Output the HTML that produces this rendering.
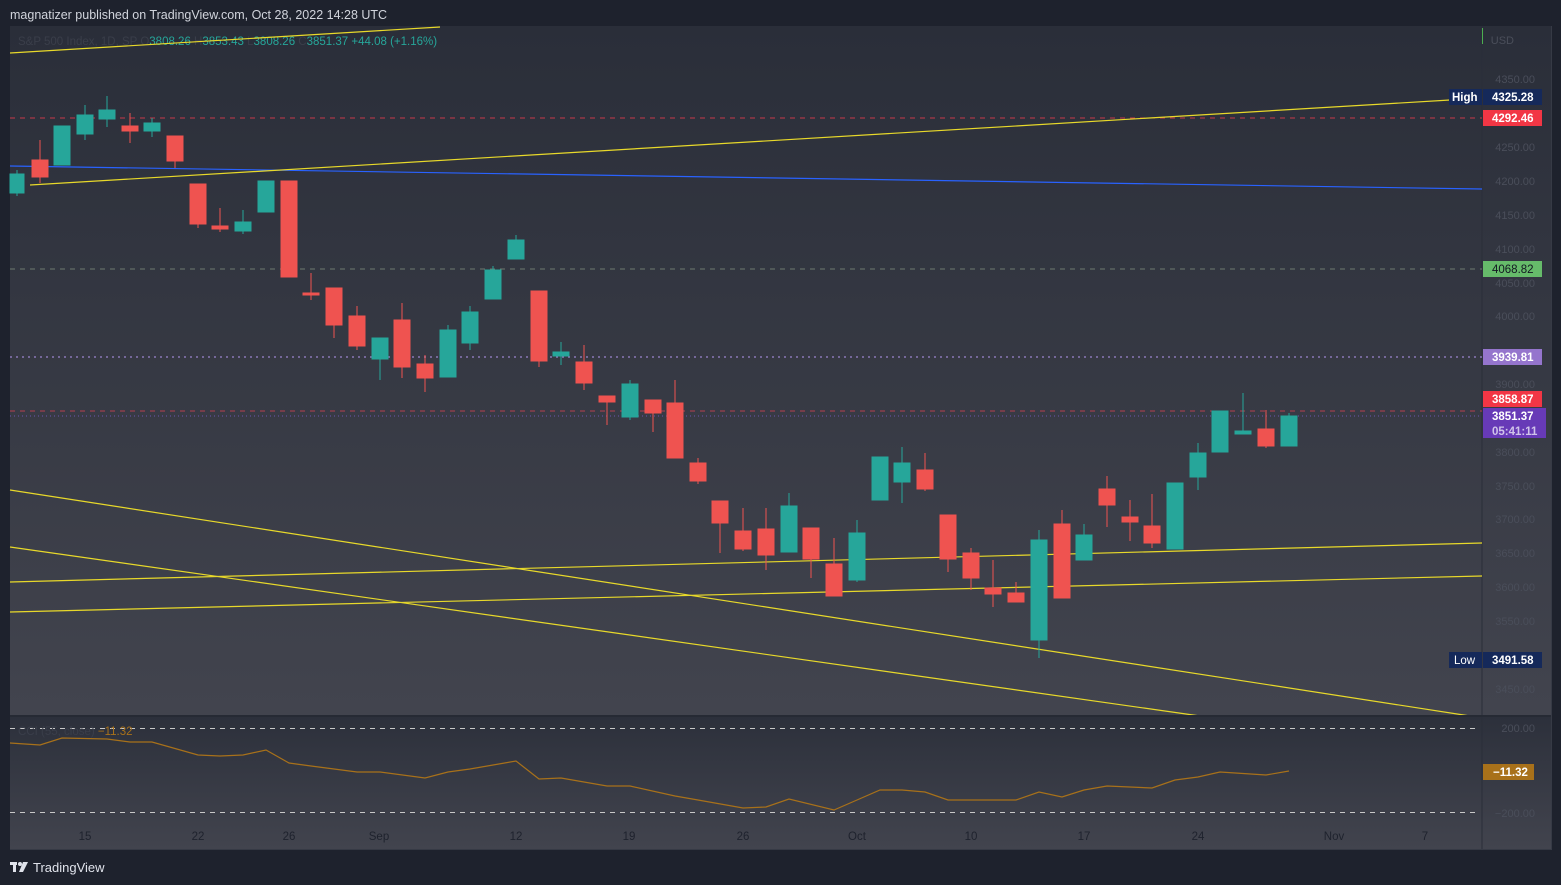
<!DOCTYPE html>
<html><head><meta charset="utf-8"><style>
html,body{margin:0;padding:0;background:#1e222d;width:1561px;height:885px;overflow:hidden;font-family:"Liberation Sans",sans-serif}
</style></head><body>
<svg width="1561" height="885" xmlns="http://www.w3.org/2000/svg" font-family="Liberation Sans, sans-serif">
<defs>
<linearGradient id="bg" x1="0" y1="0" x2="0" y2="1"><stop offset="0" stop-color="#2a2e39"/><stop offset="1" stop-color="#42444e"/></linearGradient>
<linearGradient id="bg2" x1="0" y1="0" x2="0" y2="1"><stop offset="0" stop-color="#2c303b"/><stop offset="1" stop-color="#42444e"/></linearGradient>
</defs>
<rect width="1561" height="885" fill="#1e222d"/>
<text x="10" y="19" fill="#d1d4dc" font-size="12.5">magnatizer published on TradingView.com, Oct 28, 2022 14:28 UTC</text>
<rect x="10" y="26" width="1541" height="690" fill="url(#bg)"/>
<rect x="10" y="716" width="1541" height="134" fill="url(#bg2)"/>
<line x1="1482" y1="26" x2="1482" y2="850" stroke="#2a2e39" stroke-width="1"/>
<line x1="1482.5" y1="28" x2="1482.5" y2="44" stroke="#4caf50"/>
<line x1="1551.5" y1="26" x2="1551.5" y2="850" stroke="#363a45"/>
<line x1="10" y1="849.5" x2="1551" y2="849.5" stroke="#363a45"/>
<g fill="#4a4e5a" font-size="11" text-anchor="end"><text x="1514" y="44">USD</text>
<text x="1535" y="83">4350.00</text><text x="1535" y="151">4250.00</text><text x="1535" y="185">4200.00</text><text x="1535" y="219">4150.00</text><text x="1535" y="253">4100.00</text><text x="1535" y="287">4050.00</text><text x="1535" y="320">4000.00</text><text x="1535" y="388">3900.00</text><text x="1535" y="456">3800.00</text><text x="1535" y="490">3750.00</text><text x="1535" y="523">3700.00</text><text x="1535" y="557">3650.00</text><text x="1535" y="591">3600.00</text><text x="1535" y="625">3550.00</text><text x="1535" y="693">3450.00</text>
<text x="1535" y="732">200.00</text><text x="1535" y="817">−200.00</text></g>
<text x="18" y="45" fill="#3a3e4a" font-size="11.5">S&amp;P 500 Index, 1D, SP  O<tspan fill="#26a69a">3808.26</tspan>  H<tspan fill="#26a69a">3853.43</tspan>  L<tspan fill="#26a69a">3808.26</tspan>  C<tspan fill="#26a69a">3851.37  +44.08 (+1.16%)</tspan></text>
<line x1="10" y1="118" x2="1482" y2="118" stroke="#c8394a" stroke-dasharray="5,5"/>
<line x1="10" y1="269" x2="1482" y2="269" stroke="#6d7a70" stroke-dasharray="5,5"/>
<line x1="10" y1="357" x2="1482" y2="357" stroke="#8a78b8" stroke-dasharray="2,4" stroke-width="1.5"/>
<line x1="10" y1="411" x2="1482" y2="411" stroke="#b5404e" stroke-dasharray="5,5"/>
<line x1="10" y1="416" x2="1482" y2="416" stroke="#6a55b0" stroke-dasharray="1,3"/>
<line x1="10" y1="166" x2="1482" y2="189" stroke="#2962ff" stroke-width="1.2"/>
<g stroke="#e8d92a" stroke-width="1.2">
<line x1="10" y1="53" x2="440" y2="27"/>
<line x1="30" y1="185" x2="1450" y2="100"/>
<line x1="10" y1="490" x2="1470" y2="716"/>
<line x1="10" y1="547" x2="1200" y2="716"/>
<line x1="10" y1="582" x2="1482" y2="543"/>
<line x1="10" y1="612" x2="1482" y2="576"/>
</g>
<g stroke="#26a69a" fill="#26a69a">
<line x1="17" y1="170" x2="17" y2="196"/><rect x="10" y="174" width="14" height="19"/>
<line x1="62" y1="126" x2="62" y2="165"/><rect x="54" y="126" width="16" height="39"/>
<line x1="85" y1="105" x2="85" y2="140"/><rect x="77" y="115" width="16" height="19"/>
<line x1="107" y1="96" x2="107" y2="127"/><rect x="99" y="110" width="16" height="9"/>
<line x1="152" y1="118" x2="152" y2="137"/><rect x="144" y="123" width="16" height="8"/>
<line x1="243" y1="210" x2="243" y2="234"/><rect x="235" y="222" width="16" height="9"/>
<line x1="266" y1="181" x2="266" y2="212"/><rect x="258" y="181" width="16" height="31"/>
<line x1="380" y1="338" x2="380" y2="380"/><rect x="372" y="338" width="16" height="21"/>
<line x1="448" y1="325" x2="448" y2="377"/><rect x="440" y="330" width="16" height="47"/>
<line x1="470" y1="306" x2="470" y2="350"/><rect x="462" y="312" width="16" height="31"/>
<line x1="493" y1="266" x2="493" y2="299"/><rect x="485" y="270" width="16" height="29"/>
<line x1="516" y1="235" x2="516" y2="259"/><rect x="508" y="240" width="16" height="19"/>
<line x1="561" y1="342" x2="561" y2="365"/><rect x="553" y="352" width="16" height="4"/>
<line x1="630" y1="380" x2="630" y2="420"/><rect x="622" y="384" width="16" height="33"/>
<line x1="789" y1="493" x2="789" y2="552"/><rect x="781" y="506" width="16" height="46"/>
<line x1="857" y1="520" x2="857" y2="582"/><rect x="849" y="533" width="16" height="47"/>
<line x1="880" y1="457" x2="880" y2="500"/><rect x="872" y="457" width="16" height="43"/>
<line x1="902" y1="447" x2="902" y2="503"/><rect x="894" y="463" width="16" height="19"/>
<line x1="1039" y1="530" x2="1039" y2="658"/><rect x="1031" y="540" width="16" height="100"/>
<line x1="1084" y1="524" x2="1084" y2="560"/><rect x="1076" y="535" width="16" height="25"/>
<line x1="1175" y1="483" x2="1175" y2="549"/><rect x="1167" y="483" width="16" height="66"/>
<line x1="1198" y1="443" x2="1198" y2="490"/><rect x="1190" y="453" width="16" height="24"/>
<line x1="1220" y1="411" x2="1220" y2="452"/><rect x="1212" y="411" width="16" height="41"/>
<line x1="1243" y1="393" x2="1243" y2="434"/><rect x="1235" y="431" width="16" height="3"/>
<line x1="1289" y1="413" x2="1289" y2="446"/><rect x="1281" y="416" width="16" height="30"/>
</g>
<g stroke="#ef5350" fill="#ef5350">
<line x1="40" y1="140" x2="40" y2="183"/><rect x="32" y="160" width="16" height="17"/>
<line x1="130" y1="113" x2="130" y2="143"/><rect x="122" y="126" width="16" height="5"/>
<line x1="175" y1="136" x2="175" y2="168"/><rect x="167" y="136" width="16" height="25"/>
<line x1="198" y1="184" x2="198" y2="228"/><rect x="190" y="184" width="16" height="40"/>
<line x1="220" y1="208" x2="220" y2="232"/><rect x="212" y="226" width="16" height="3"/>
<line x1="289" y1="181" x2="289" y2="277"/><rect x="281" y="181" width="16" height="96"/>
<line x1="311" y1="273" x2="311" y2="300"/><rect x="303" y="293" width="16" height="2"/>
<line x1="334" y1="288" x2="334" y2="338"/><rect x="326" y="288" width="16" height="37"/>
<line x1="357" y1="306" x2="357" y2="350"/><rect x="349" y="316" width="16" height="30"/>
<line x1="402" y1="303" x2="402" y2="378"/><rect x="394" y="320" width="16" height="47"/>
<line x1="425" y1="355" x2="425" y2="392"/><rect x="417" y="364" width="16" height="14"/>
<line x1="539" y1="291" x2="539" y2="367"/><rect x="531" y="291" width="16" height="70"/>
<line x1="584" y1="345" x2="584" y2="390"/><rect x="576" y="362" width="16" height="21"/>
<line x1="607" y1="396" x2="607" y2="425"/><rect x="599" y="396" width="16" height="6"/>
<line x1="653" y1="400" x2="653" y2="432"/><rect x="645" y="400" width="16" height="13"/>
<line x1="675" y1="380" x2="675" y2="458"/><rect x="667" y="403" width="16" height="55"/>
<line x1="698" y1="458" x2="698" y2="484"/><rect x="690" y="463" width="16" height="18"/>
<line x1="720" y1="501" x2="720" y2="553"/><rect x="712" y="501" width="16" height="22"/>
<line x1="743" y1="508" x2="743" y2="551"/><rect x="735" y="531" width="16" height="18"/>
<line x1="766" y1="508" x2="766" y2="570"/><rect x="758" y="529" width="16" height="26"/>
<line x1="811" y1="528" x2="811" y2="578"/><rect x="803" y="528" width="16" height="31"/>
<line x1="834" y1="538" x2="834" y2="596"/><rect x="826" y="564" width="16" height="32"/>
<line x1="925" y1="453" x2="925" y2="491"/><rect x="917" y="470" width="16" height="19"/>
<line x1="948" y1="515" x2="948" y2="572"/><rect x="940" y="515" width="16" height="44"/>
<line x1="971" y1="548" x2="971" y2="590"/><rect x="963" y="553" width="16" height="25"/>
<line x1="993" y1="560" x2="993" y2="607"/><rect x="985" y="588" width="16" height="6"/>
<line x1="1016" y1="582" x2="1016" y2="602"/><rect x="1008" y="593" width="16" height="9"/>
<line x1="1062" y1="510" x2="1062" y2="598"/><rect x="1054" y="524" width="16" height="74"/>
<line x1="1107" y1="476" x2="1107" y2="527"/><rect x="1099" y="489" width="16" height="16"/>
<line x1="1130" y1="500" x2="1130" y2="541"/><rect x="1122" y="517" width="16" height="5"/>
<line x1="1152" y1="494" x2="1152" y2="548"/><rect x="1144" y="526" width="16" height="17"/>
<line x1="1266" y1="410" x2="1266" y2="448"/><rect x="1258" y="429" width="16" height="17"/>
</g>
<g font-size="11.5" font-weight="bold" fill="#fff">
<rect x="1449" y="89" width="33" height="16" fill="#15295a"/><text x="1452" y="101">High</text>
<rect x="1483" y="89" width="59" height="16" fill="#15295a"/><text x="1492" y="101">4325.28</text>
<rect x="1483" y="110" width="59" height="16" fill="#f23645"/><text x="1492" y="122">4292.46</text>
<rect x="1483" y="261" width="59" height="16" fill="#66bb6a"/><text x="1492" y="273" fill="#131722" font-weight="normal">4068.82</text>
<rect x="1483" y="349" width="59" height="16" fill="#9575cd"/><text x="1492" y="361">3939.81</text>
<rect x="1483" y="391" width="59" height="16" fill="#f23645"/><text x="1492" y="403">3858.87</text>
<rect x="1483" y="408" width="63" height="30" fill="#673ab7"/><text x="1492" y="420">3851.37</text><text x="1492" y="435" fill="#d0c4ea">05:41:11</text>
<rect x="1449" y="652" width="33" height="16" fill="#15295a"/><text x="1454" y="664" font-weight="normal">Low</text>
<rect x="1483" y="652" width="59" height="16" fill="#15295a"/><text x="1492" y="664">3491.58</text>
<rect x="1483" y="764" width="51" height="16" fill="#a8711a"/><text x="1493" y="776">−11.32</text>
</g>
<line x1="10" y1="716" x2="1551" y2="716" stroke="#262a34" stroke-width="2"/>
<g stroke="#c9c9c9" stroke-dasharray="5,5"><line x1="10" y1="728.5" x2="1480" y2="728.5"/><line x1="10" y1="812.5" x2="1480" y2="812.5"/></g>
<text x="18" y="735" fill="#3a3e4a" font-size="11.5">CCI (55, close)  <tspan fill="#a8711a">−11.32</tspan></text>
<polyline fill="none" stroke="#a8711a" stroke-width="1.2" points="10,743 40,745 62,738 107,739 130,742 152,742 198,755 220,756 243,755 266,750 289,763 311,766 357,772 380,772 425,778 448,772 470,769 516,761 539,779 561,778 607,786 630,786 675,796 698,800 743,808 766,807 789,799 834,810 857,800 880,790 902,790 925,792 948,800 1016,800 1039,792 1062,797 1084,790 1107,786 1152,788 1175,780 1198,777 1220,772 1266,775 1289,771"/>
<g fill="#1e222d" font-size="11.5" text-anchor="middle">
<text x="85" y="840">15</text><text x="198" y="840">22</text><text x="289" y="840">26</text><text x="379" y="840">Sep</text><text x="516" y="840">12</text><text x="629" y="840">19</text><text x="743" y="840">26</text><text x="857" y="840">Oct</text><text x="971" y="840">10</text><text x="1084" y="840">17</text><text x="1198" y="840">24</text><text x="1334" y="840">Nov</text><text x="1425" y="840">7</text>
</g>
<g fill="#e0e3eb"><rect x="10" y="862" width="7" height="3"/><rect x="13" y="862" width="3" height="10"/><circle cx="20" cy="864" r="2"/><path d="M23 862 H28 L23 872 H19 Z"/></g>
<text x="33" y="872" fill="#e0e3eb" font-size="13">TradingView</text>
</svg>
</body></html>
